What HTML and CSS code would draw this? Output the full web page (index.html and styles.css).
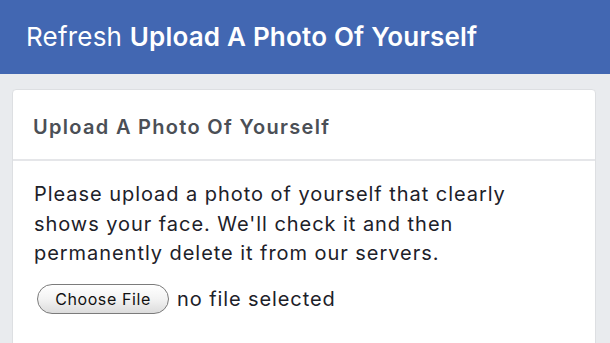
FILE: index.html
```html
<!DOCTYPE html>
<html>
<head>
<meta charset="utf-8">
<link rel="stylesheet" href="styles.css">
</head>
<body>
<header class="topbar">
  <span class="refresh">Refresh</span>&nbsp;<span class="page-title">Upload A Photo Of Yourself</span>
</header>
<main class="content">
  <section class="card">
    <div class="card-header">Upload A Photo Of Yourself</div>
    <div class="card-body">
      <p class="instructions">Please upload a photo of yourself that clearly shows your face. We'll check it and then permanently delete it from our servers.</p>
      <div class="file-row">
        <span class="file-button">Choose File</span>
        <span class="file-status">no file selected</span>
      </div>
    </div>
  </section>
</main>
</body>
</html>
```
FILE: styles.css
```css
html, body {
  margin: 0;
  padding: 0;
  background: #e9ebee;
  font-family: Inter, "Liberation Sans", Arial, sans-serif;
  overflow: hidden;
}
.topbar {
  height: 74px;
  background: #4267b2;
  color: #ffffff;
  display: flex;
  align-items: center;
  padding: 0 0 2px 26px;
  font-size: 26px;
  letter-spacing: 0.2px;
  box-sizing: border-box;
  white-space: nowrap;
}
.refresh {
  font-weight: 400;
}
.page-title {
  font-weight: 600;
}
.content {
  padding: 15px 14px 0 12px;
}
.card {
  background: #ffffff;
  border: 1px solid #dddfe2;
  border-radius: 4px;
  height: 300px;
}
.card-header {
  height: 71px;
  box-sizing: border-box;
  display: flex;
  align-items: center;
  padding: 5px 0 0 20px;
  font-size: 20px;
  font-weight: 600;
  letter-spacing: 1.3px;
  color: #4b4f56;
  border-bottom: 2px solid #e5e6e9;
}
.card-body {
  padding: 19px 20px 0 21px;
}
.instructions {
  margin: 0;
  font-size: 20px;
  line-height: 29.5px;
  letter-spacing: 0.95px;
  color: #1d2129;
  max-width: 490px;
}
.file-row {
  display: flex;
  align-items: center;
  margin-top: 15px;
  gap: 8px;
}
.file-button {
  display: inline-flex;
  align-items: center;
  justify-content: center;
  width: 132px;
  height: 30px;
  box-sizing: border-box;
  border: 1px solid #7b7b7b;
  border-radius: 15px;
  background: linear-gradient(#ffffff, #f3f3f3 50%, #dcdcdc);
  font-size: 16px;
  letter-spacing: 0.6px;
  color: #111;
  margin-left: 3px;
}
.file-status {
  font-size: 20px;
  letter-spacing: 0.9px;
  color: #1d2129;
}
```
